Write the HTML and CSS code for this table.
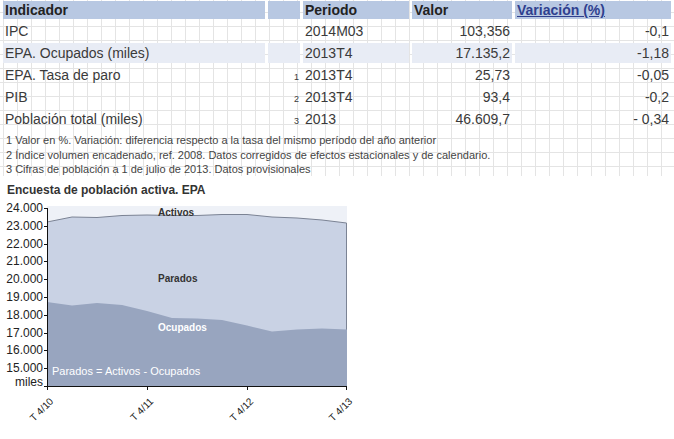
FILE: index.html
```html
<!DOCTYPE html>
<html lang="es">
<head>
<meta charset="utf-8">
<link rel="stylesheet" href="styles.css">
</head>
<body>
<div class="grid-area">
  <table class="ind">
    <colgroup>
      <col class="c1"><col class="c2"><col class="c3"><col class="c4"><col class="c5">
    </colgroup>
    <thead>
      <tr>
        <th>Indicador</th>
        <th></th>
        <th>Periodo</th>
        <th>Valor</th>
        <th><a href="#" class="var-link">Variación (%)</a></th>
      </tr>
    </thead>
    <tbody>
      <tr><td>IPC</td><td class="n"></td><td>2014M03</td><td class="r">103,356</td><td class="r">-0,1</td></tr>
      <tr class="alt"><td>EPA. Ocupados (miles)</td><td class="n"></td><td>2013T4</td><td class="r">17.135,2</td><td class="r">-1,18</td></tr>
      <tr><td>EPA. Tasa de paro</td><td class="n">1</td><td>2013T4</td><td class="r">25,73</td><td class="r">-0,05</td></tr>
      <tr><td>PIB</td><td class="n">2</td><td>2013T4</td><td class="r">93,4</td><td class="r">-0,2</td></tr>
      <tr><td>Población total (miles)</td><td class="n">3</td><td>2013</td><td class="r">46.609,7</td><td class="r">- 0,34</td></tr>
    </tbody>
  </table>
  <div class="notes">
    <p>1 Valor en %. Variación: diferencia respecto a la tasa del mismo período del año anterior</p>
    <p>2 Índice volumen encadenado, ref. 2008. Datos corregidos de efectos estacionales y de calendario.</p>
    <p>3 Cifras de población a 1 de julio de 2013. Datos provisionales</p>
  </div>
</div>
<div class="chart">
  <h2 class="chart-title">Encuesta de población activa. EPA</h2>
  <svg class="chart-svg" width="360" height="241" viewBox="0 198 360 241">
    <rect x="47" y="207" width="300" height="180" fill="#eef1f7"/>
    <polygon fill="#c9d2e4" points="47,223 72,218 97,218.5 122,216.5 147,216 172,216.5 197,216.5 222,215.5 247,215.5 272,218 297,219 322,221 347,224 347,387 47,387"/>
    <polyline fill="none" stroke="#7b8394" stroke-width="1" points="47,223 72,218 97,218.5 122,216.5 147,216 172,216.5 197,216.5 222,215.5 247,215.5 272,218 297,219 322,221 346.5,224 346.5,387"/>
    <polygon fill="#98a5bf" points="47,303 72,306.5 97,304 122,306 147,312 172,319 197,319.5 222,321 247,326.5 272,332.5 297,330.5 322,329.5 347,330.5 347,387 47,387"/>
    <g class="lbl-dark">
      <text x="158" y="217">Activos</text>
      <text x="158" y="283">Parados</text>
    </g>
    <text class="lbl-light" x="158" y="332">Ocupados</text>
    <text class="lbl-note" x="52" y="376">Parados = Activos - Ocupados</text>
    <g class="axis" stroke="#111" stroke-width="1">
      <line x1="47.5" y1="209" x2="47.5" y2="387"/>
      <line x1="44" y1="387.5" x2="347" y2="387.5"/>
      <line x1="44" y1="209.5" x2="47" y2="209.5"/>
      <line x1="44" y1="227.5" x2="47" y2="227.5"/>
      <line x1="44" y1="245.5" x2="47" y2="245.5"/>
      <line x1="44" y1="262.5" x2="47" y2="262.5"/>
      <line x1="44" y1="280.5" x2="47" y2="280.5"/>
      <line x1="44" y1="298.5" x2="47" y2="298.5"/>
      <line x1="44" y1="316.5" x2="47" y2="316.5"/>
      <line x1="44" y1="334.5" x2="47" y2="334.5"/>
      <line x1="44" y1="351.5" x2="47" y2="351.5"/>
      <line x1="44" y1="369.5" x2="47" y2="369.5"/>
      <line x1="47.5" y1="387" x2="47.5" y2="391"/>
      <line x1="147.5" y1="387" x2="147.5" y2="391"/>
      <line x1="247.5" y1="387" x2="247.5" y2="391"/>
      <line x1="346.5" y1="387" x2="346.5" y2="391"/>
    </g>
    <g class="ylab">
      <text x="43" y="213">24.000</text>
      <text x="43" y="231">23.000</text>
      <text x="43" y="249">22.000</text>
      <text x="43" y="266">21.000</text>
      <text x="43" y="284">20.000</text>
      <text x="43" y="302">19.000</text>
      <text x="43" y="320">18.000</text>
      <text x="43" y="338">17.000</text>
      <text x="43" y="355">16.000</text>
      <text x="43" y="373">15.000</text>
      <text x="43" y="387">miles</text>
    </g>
    <g class="xlab">
      <text x="54" y="403" transform="rotate(-45 54 403)">T 4/10</text>
      <text x="154" y="403" transform="rotate(-45 154 403)">T 4/11</text>
      <text x="254" y="403" transform="rotate(-45 254 403)">T 4/12</text>
      <text x="353" y="403" transform="rotate(-45 353 403)">T 4/13</text>
    </g>
  </svg>
</div>
</body>
</html>
```

FILE: styles.css
```css
html, body {
  margin: 0;
  padding: 0;
  overflow: hidden;
  background: #fff;
}

body {
  font-family: "Liberation Sans", Arial, sans-serif;
  color: #333;
}

.grid-area {
  height: 177px;
  background-color: #fff;
  background-image:
    linear-gradient(to right, #e4e4e4 1px, transparent 1px),
    linear-gradient(to bottom, #e4e4e4 1px, transparent 1px);
  background-size: 14px 14px;
  background-position: 3px 13px;
}

.ind {
  table-layout: fixed;
  border-collapse: separate;
  border-spacing: 3px 2px;
  width: 674px;
  margin-top: -1px;
  font-size: 14px;
}

.c1 { width: 262px; }
.c2 { width: 32px; }
.c3 { width: 106px; }
.c4 { width: 100px; }
.c5 { width: 156px; }

.ind th {
  background: #b8c8e2;
  height: 18px;
  padding: 0 2px;
  text-align: left;
  font-weight: bold;
  color: #222;
  line-height: 18px;
}

.ind td {
  height: 20px;
  padding: 0 2px;
  line-height: 20px;
  color: #3a3a3a;
  white-space: nowrap;
  overflow: hidden;
}

.ind tr.alt td {
  background: #e8ecf5;
}

.ind td.r {
  text-align: right;
}

.ind td.n {
  text-align: right;
  font-size: 9px;
  line-height: 16px;
  padding: 4px 1px 0 0;
  height: 16px;
  vertical-align: top;
}

.var-link {
  color: #2f3f8e;
  text-decoration: underline;
}

.notes {
  margin-top: 2px;
  padding-left: 6px;
  font-size: 11px;
  line-height: 14.5px;
  color: #444;
}

.notes p {
  margin: 0;
}

.chart {
  padding-top: 8px;
}

.chart-title {
  margin: 0 0 0 7px;
  font-size: 12px;
  line-height: 13px;
  font-weight: bold;
  color: #333;
}

.chart-svg {
  display: block;
  font-family: "Liberation Sans", Arial, sans-serif;
}

.lbl-dark text {
  font-size: 10px;
  font-weight: bold;
  fill: #333;
}

.lbl-light {
  font-size: 10px;
  font-weight: bold;
  fill: #fff;
}

.lbl-note {
  font-size: 11px;
  fill: #fff;
}

.ylab text {
  font-size: 12px;
  fill: #222;
  text-anchor: end;
}

.xlab text {
  font-size: 10px;
  fill: #222;
  text-anchor: end;
}
```
